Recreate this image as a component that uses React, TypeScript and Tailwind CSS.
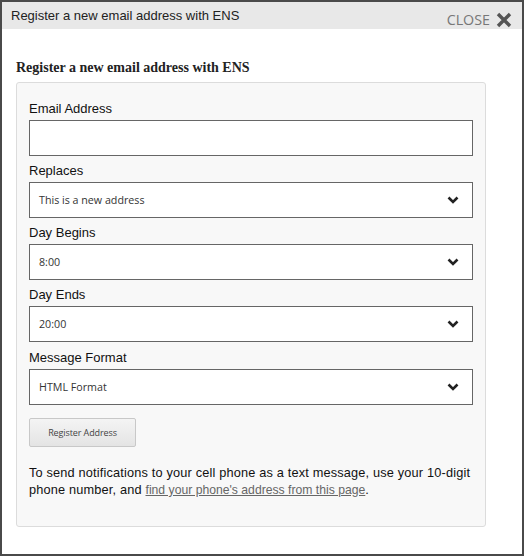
import React from "react";

const Chevron = () => (
  <svg width="12" height="8" viewBox="0 0 12 8" className="shrink-0">
    <path d="M1.5 1.5 L6 6 L10.5 1.5" fill="none" stroke="#222" strokeWidth="2.6" />
  </svg>
);

const Select = ({ value }: { value: string }) => (
  <div className="h-[36px] w-full border border-[#666] bg-white flex items-center justify-between pl-[9px] pr-[13px]">
    <span className="text-[10.7px] text-[#333] [font-family:'Open_Sans',sans-serif]">{value}</span>
    <Chevron />
  </div>
);

const Label = ({ children }: { children: React.ReactNode }) => (
  <div className="text-[13px] leading-[15px] text-[#111] [font-family:'Liberation_Sans',Arial,sans-serif] mb-[4px]">
    {children}
  </div>
);

export default function App() {
  return (
    <div className="w-[524px] h-[556px] border-2 border-[#4a4a4a] bg-white flex flex-col">
      <div className="h-[27px] bg-[#e8e8e8] flex items-center justify-between pl-[9px] pr-[10px] shrink-0">
        <span className="text-[13px] text-[#222] [font-family:'Liberation_Sans',Arial,sans-serif]">
          Register a new email address with ENS
        </span>
        <span className="flex items-center gap-[6px] mt-[9px]">
          <span className="text-[14.3px] leading-[16px] text-[#777] [font-family:'Open_Sans',sans-serif]">CLOSE</span>
          <svg width="16" height="16" viewBox="0 0 16 16">
            <path d="M2 2 L14 14 M14 2 L2 14" stroke="#555" strokeWidth="3.4" strokeLinecap="butt" />
          </svg>
        </span>
      </div>
      <div className="pl-[14px] pr-[36px] pt-[30px]">
        <h2 className="text-[14px] font-bold text-[#222] [font-family:'Liberation_Serif',serif] leading-[18px]">
          Register a new email address with ENS
        </h2>
        <div className="mt-[5px] h-[445px] bg-[#f8f8f8] border border-[#dcdcdc] rounded-[3px] pl-[12px] pr-[12px] pt-[18px]">
          <Label>Email Address</Label>
          <div className="h-[36px] w-full border border-[#666] bg-white mb-[7px]" />
          <Label>Replaces</Label>
          <div className="mb-[7px]"><Select value="This is a new address" /></div>
          <Label>Day Begins</Label>
          <div className="mb-[7px]"><Select value="8:00" /></div>
          <Label>Day Ends</Label>
          <div className="mb-[8px]"><Select value="20:00" /></div>
          <Label>Message Format</Label>
          <Select value="HTML Format" />
          <button className="mt-[13px] w-[107px] h-[29px] border border-[#c8c8c8] rounded-[2px] bg-gradient-to-b from-[#f4f4f4] to-[#e4e4e4] text-[9px] tracking-[-0.1px] text-[#444] [font-family:'Open_Sans',sans-serif]">
            Register Address
          </button>
          <p className="mt-[17px] text-[12.75px] tracking-[0.17px] leading-[17px] text-[#111] [font-family:'Liberation_Sans',Arial,sans-serif]">
            To send notifications to your cell phone as a text message, use your 10-digit phone number, and{" "}
            <a className="underline text-[#666] text-[12.2px] tracking-[0px]">find your phone's address from this page</a>.
          </p>
        </div>
      </div>
    </div>
  );
}
